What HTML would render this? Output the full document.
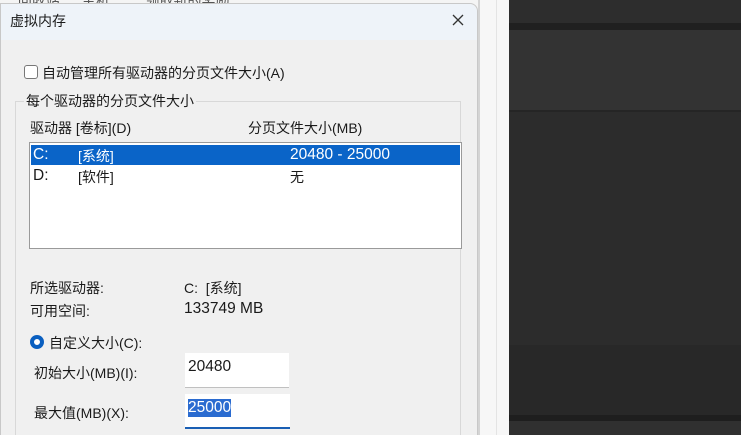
<!DOCTYPE html>
<html><head><meta charset="utf-8"><style>
*{margin:0;padding:0;box-sizing:border-box}
html,body{width:741px;height:435px;overflow:hidden}
body{background:#f4f4f4;position:relative;font-family:"Liberation Sans","Noto Sans CJK SC",sans-serif;font-size:14px;color:#1a1a1a}
.a{position:absolute;white-space:nowrap}
.n{font-size:15.5px}
</style></head><body>
<div class="a" style="left:0;top:-9px;color:#555">　 回收站 　 主机 　　 领取新的奖励</div>
<div class="a" style="left:0;top:3px;width:478px;height:432px;background:#f0f0f0;border:1px solid #c8c8c8;border-bottom:none;border-radius:0 8px 0 0"></div>
<div class="a" style="left:1px;top:4px;width:476px;height:36px;background:#eef3f9;border-radius:0 8px 0 0"></div>
<div class="a" style="left:10px;top:11px;font-size:14px">虚拟内存</div>
<svg class="a" style="left:452px;top:14px" width="12" height="12"><path d="M1 1L11 11M11 1L1 11" stroke="#333" stroke-width="1.3"/></svg>
<div class="a" style="left:478px;top:0;width:31px;height:435px;background:#f7f7f7;border-left:2px solid #d4d4d4"></div>
<div class="a" style="left:496px;top:0;width:1px;height:435px;background:#e4e4e4"></div>
<div class="a" style="left:509px;top:0;width:232px;height:435px;background:#2c2c2c"></div>
<div class="a" style="left:509px;top:0;width:232px;height:23px;background:#2d2d2d"></div>
<div class="a" style="left:509px;top:23px;width:232px;height:7px;background:#202020"></div>
<div class="a" style="left:509px;top:30px;width:232px;height:80px;background:#333"></div>
<div class="a" style="left:509px;top:110px;width:232px;height:2px;background:#252525"></div>
<div class="a" style="left:509px;top:345px;width:232px;height:70px;background:#282828"></div>
<div class="a" style="left:509px;top:415px;width:232px;height:6px;background:#1e1e1e"></div>
<div class="a" style="left:509px;top:421px;width:232px;height:14px;background:#303030"></div>
<div class="a" style="left:24px;top:65px;width:14px;height:14px;border:1px solid #777;border-radius:3px;background:#fff"></div>
<div class="a" style="left:42px;top:63px">自动管理所有驱动器的分页文件大小(A)</div>
<div class="a" style="left:15px;top:101px;width:446px;height:340px;border:1px solid #d8d8d8"></div>
<div class="a" style="left:24px;top:91px;background:#f0f0f0;padding:0 2px">每个驱动器的分页文件大小</div>
<div class="a" style="left:30px;top:118px">驱动器 [卷标](D)</div>
<div class="a" style="left:248px;top:118px">分页文件大小(MB)</div>
<div class="a" style="left:29px;top:142px;width:433px;height:107px;background:#fff;border:1px solid #9a9a9a"></div>
<div class="a" style="left:31px;top:145px;width:429px;height:20px;background:#0a64c8"></div>
<div class="a n" style="left:33px;top:146px;color:#fff">C:</div>
<div class="a" style="left:78px;top:146px;color:#fff">[系统]</div>
<div class="a n" style="left:290px;top:146px;color:#fff">20480 - 25000</div>
<div class="a n" style="left:33px;top:167px">D:</div>
<div class="a" style="left:78px;top:167px">[软件]</div>
<div class="a" style="left:290px;top:167px">无</div>
<div class="a" style="left:30px;top:278px">所选驱动器:</div>
<div class="a" style="left:184px;top:278px">C:&nbsp; [系统]</div>
<div class="a" style="left:30px;top:301px">可用空间:</div>
<div class="a n" style="left:184px;top:300px">133749 MB</div>
<div class="a" style="left:30px;top:335px;width:14px;height:14px;border-radius:50%;border:4px solid #0a5fc0;background:#fff"></div>
<div class="a" style="left:49px;top:333px">自定义大小(C):</div>
<div class="a" style="left:34px;top:363px">初始大小(MB)(I):</div>
<div class="a" style="left:185px;top:353px;width:104px;height:35px;background:#fff;border-bottom:1px solid #c0c0c0"></div>
<div class="a n" style="left:188px;top:358px">20480</div>
<div class="a" style="left:34px;top:403px">最大值(MB)(X):</div>
<div class="a" style="left:185px;top:394px;width:105px;height:35px;background:#fff;border-bottom:2px solid #1a5fb4"></div>
<div class="a n" style="left:188px;top:399px;background:#2a6bd0;color:#fff">25000</div>
</body></html>
